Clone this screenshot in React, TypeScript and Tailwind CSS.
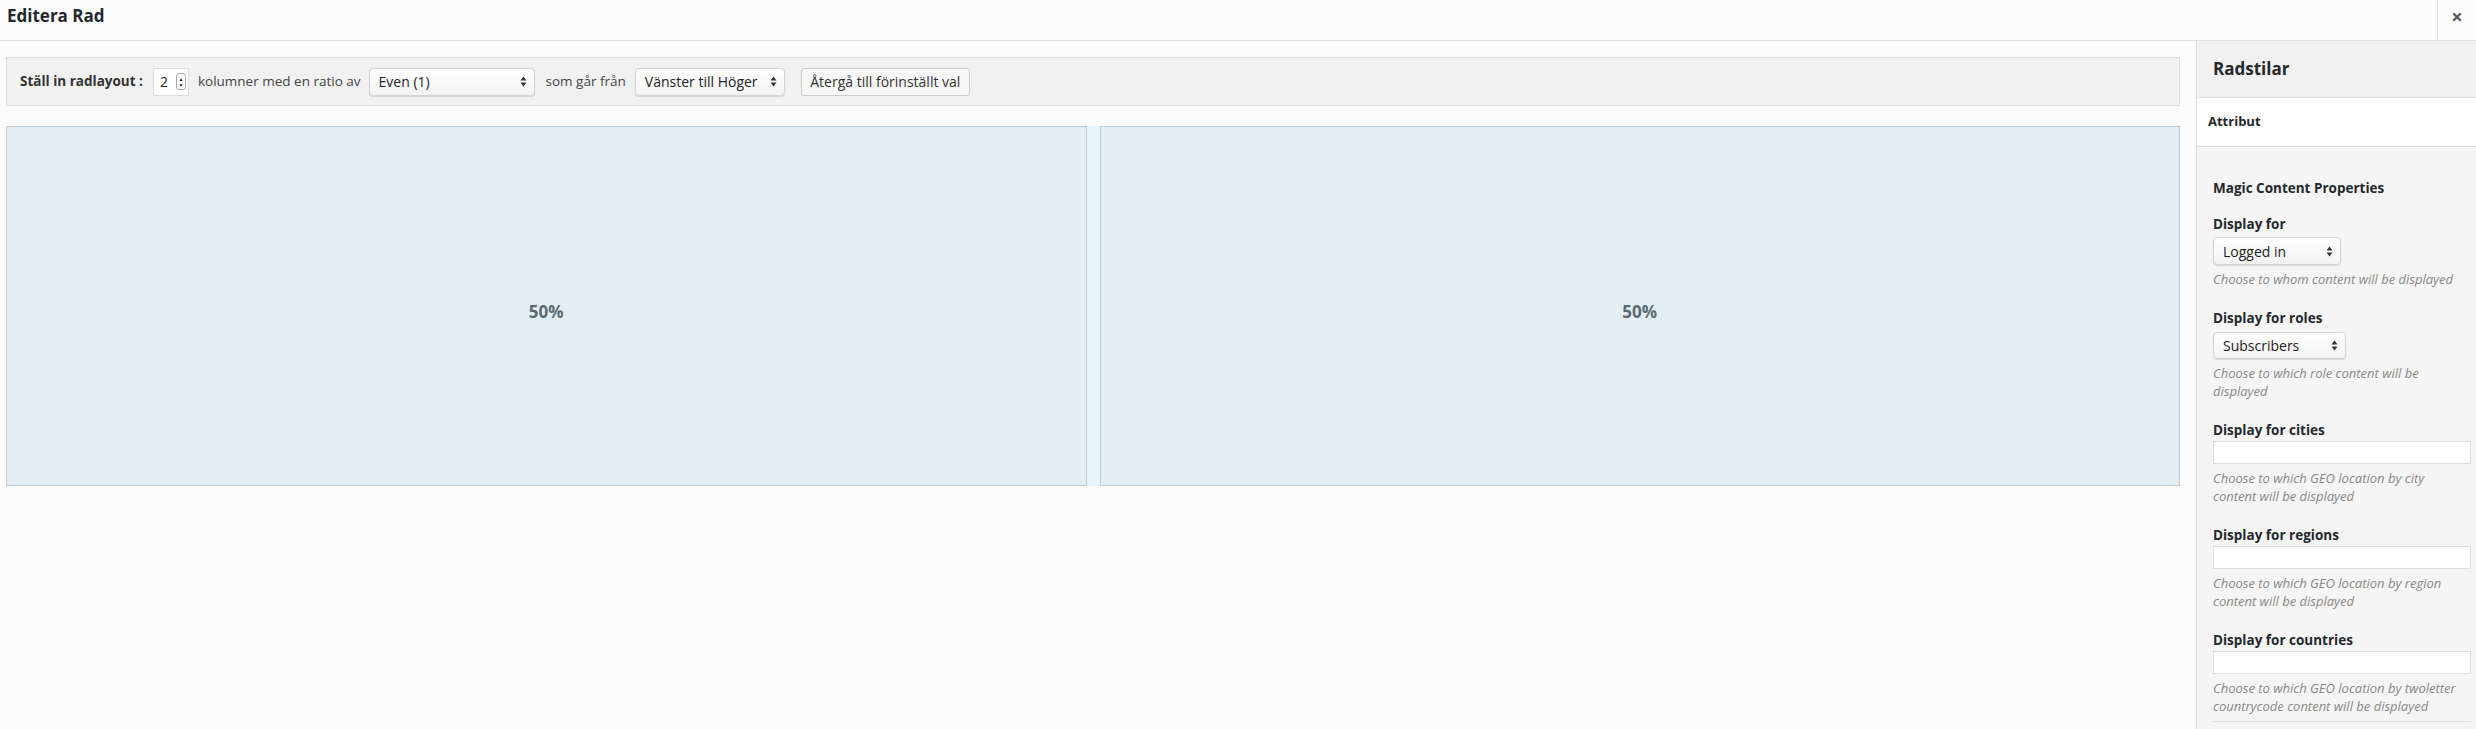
const font = { fontFamily: '"Open Sans", "Liberation Sans", sans-serif' };

const Arrows = () => (
  <svg width="7" height="11" viewBox="0 0 7 11" className="shrink-0">
    <path d="M3.5 0.5 L6.5 4.5 H0.5 Z" fill="#333" />
    <path d="M3.5 10.5 L6.5 6.5 H0.5 Z" fill="#333" />
  </svg>
);

const FakeSelect = ({ value, className }: { value: string; className: string }) => (
  <div
    className={`flex shrink-0 items-center justify-between gap-[4px] rounded-[4px] border border-[#d4d4d4] bg-gradient-to-b from-white to-[#f3f3f3] pl-[9px] pr-[7px] text-[14px] text-[#222] shadow-[0_1px_1px_rgba(0,0,0,0.12)] ${className}`}
  >
    <span className="whitespace-nowrap">{value}</span>
    <Arrows />
  </div>
);

const Field = ({ label, help, select }: { label: string; help: string[]; select?: string }) => (
  <div className="mb-[21px]">
    <div className="text-[13.5px] leading-[18px] font-bold text-[#23282d]">{label}</div>
    {select ? (
      <FakeSelect
        value={select}
        className={select === "Logged in" ? "mt-[4px] h-[28px] w-[128px]" : "mt-[5px] h-[27px] w-[133px]"}
      />
    ) : (
      <div className="mt-[2px] h-[23px] w-full border border-[#ddd] bg-white" />
    )}
    <div className="mt-[5px] text-[13px] leading-[18px] italic text-[#888]">
      {help.map((h) => (
        <div key={h}>{h}</div>
      ))}
    </div>
  </div>
);

export default function App() {
  return (
    <div className="flex h-[729px] w-[2476px] flex-col overflow-hidden bg-[#fcfcfc] text-[#23282d]" style={font}>
      <div className="flex h-[41px] shrink-0 items-stretch border-b border-[#ddd] bg-[#fcfcfc]">
        <div className="flex flex-1 items-center pl-[7px] pb-[8px] text-[17px] font-bold">Editera Rad</div>
        <div className="flex w-[39px] items-center justify-center border-l border-[#ddd] pb-[6px] text-[20px] font-bold text-[#555]">
          ×
        </div>
      </div>
      <div className="flex min-h-0 flex-1">
        <div className="flex flex-1 flex-col pl-[6px] pr-[16px] pt-[16px]">
          <div className="flex h-[49px] shrink-0 items-center border border-[#ddd] bg-[#f1f1f1] pl-[13px] text-[13.5px] text-[#444]">
            <span className="font-bold text-[#333]">Ställ in radlayout :</span>
            <div className="ml-[10px] flex h-[28px] w-[36px] items-center justify-between border border-[#ddd] bg-white pl-[6px] pr-[2px] text-[14px] text-[#222]">
              <span>2</span>
              <div className="flex h-[17px] w-[10px] flex-col items-center justify-center rounded-[3px] border border-[#aaa] text-[5px] leading-[6px]">
                <span>▲</span>
                <span>▼</span>
              </div>
            </div>
            <span className="ml-[9px]">kolumner med en ratio av</span>
            <FakeSelect value="Even (1)" className="ml-[8px] h-[28px] w-[166px]" />
            <span className="ml-[11px]">som går från</span>
            <FakeSelect value="Vänster till Höger" className="ml-[9px] h-[28px] w-[150px]" />
            <div className="ml-[16px] flex h-[28px] w-[169px] items-center justify-center rounded-[3px] border border-[#ccc] bg-[#f7f7f7] text-[14px] text-[#333]">
              Återgå till förinställt val
            </div>
          </div>
          <div className="mt-[20px] grid h-[360px] shrink-0 grid-cols-2 gap-[13px] bg-[#e6f4fb]">
            {[0, 1].map((i) => (
              <div
                key={i}
                className="flex items-center justify-center border border-[#bfccd6] bg-[#e3eef4] pt-[12px] text-[17px] font-bold text-[#5a6a74]"
              >
                50%
              </div>
            ))}
          </div>
        </div>
        <div className="flex w-[280px] shrink-0 flex-col border-l border-[#ddd] bg-[#f5f5f5]">
          <div className="flex h-[57px] shrink-0 items-center border-b border-[#ddd] bg-[#f1f1f1] pl-[16px] text-[17px] font-bold">
            Radstilar
          </div>
          <div className="flex h-[49px] shrink-0 items-center border-b border-[#ddd] bg-white pl-[11px] text-[13px] font-bold">
            Attribut
          </div>
          <div className="shrink-0 px-[16px] pt-[32px] pr-[5px]">
            <div className="mb-[18px] text-[13.5px] leading-[18px] font-bold">Magic Content Properties</div>
            <Field label="Display for" select="Logged in" help={["Choose to whom content will be displayed"]} />
            <Field label="Display for roles" select="Subscribers" help={["Choose to which role content will be", "displayed"]} />
            <Field label="Display for cities" help={["Choose to which GEO location by city", "content will be displayed"]} />
            <Field label="Display for regions" help={["Choose to which GEO location by region", "content will be displayed"]} />
            <div>
              <div className="text-[13.5px] leading-[18px] font-bold text-[#23282d]">Display for countries</div>
              <div className="mt-[2px] h-[23px] w-full border border-[#ddd] bg-white" />
              <div className="mt-[5px] text-[13px] leading-[18px] italic text-[#888]">
                <div>Choose to which GEO location by twoletter</div>
                <div>countrycode content will be displayed</div>
              </div>
              <div className="mt-[6px] border-t border-[#ddd]" />
            </div>
          </div>
        </div>
      </div>
    </div>
  );
}
